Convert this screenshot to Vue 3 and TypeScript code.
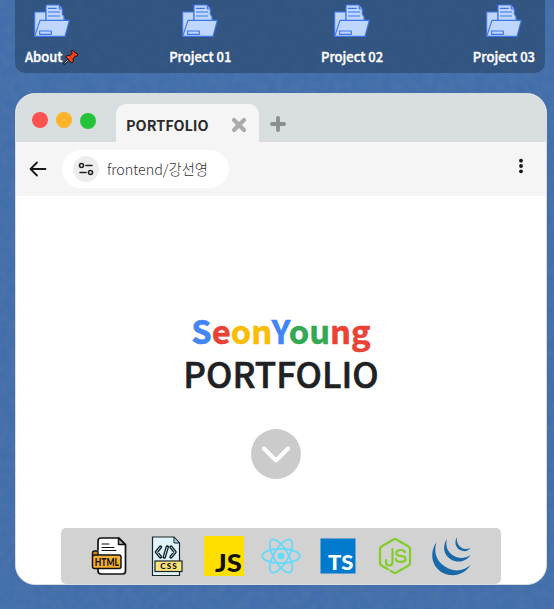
<script setup lang="ts">
interface Shortcut { label: string; pinned?: boolean }
interface Letter { char: string; tone: string }

const shortcuts: Shortcut[] = [
  { label: 'About', pinned: true },
  { label: 'Project 01' },
  { label: 'Project 02' },
  { label: 'Project 03' },
]

const letters: Letter[] = [
  { char: 'S', tone: 'blue' },
  { char: 'e', tone: 'red' },
  { char: 'o', tone: 'yellow' },
  { char: 'n', tone: 'yellow' },
  { char: 'Y', tone: 'blue' },
  { char: 'o', tone: 'green' },
  { char: 'u', tone: 'green' },
  { char: 'n', tone: 'red' },
  { char: 'g', tone: 'red' },
]
</script>

<template>
  <div class="desktop">
    <svg class="grain" width="554" height="609" aria-hidden="true">
      <filter id="grain" x="0" y="0" width="100%" height="100%">
        <feTurbulence type="fractalNoise" baseFrequency="0.12" numOctaves="3" seed="4" />
        <feColorMatrix type="matrix" values="0 0 0 0 0.1  0 0 0 0 0.2  0 0 0 0 0.4  0.7 0 0 0 -0.25" />
      </filter>
      <rect width="554" height="609" filter="url(#grain)" />
    </svg>

    <nav class="dock">
      <a v-for="item in shortcuts" :key="item.label" class="shortcut">
        <svg class="folder" viewBox="0 0 108 99" width="36" height="33">
          <g fill="#bfd6ff" stroke="#3f74e8" stroke-width="3.4" stroke-linejoin="round">
            <path d="M2 96V24h34v20h55l5 8-8 40z" />
            <path d="M36 50V3h40l9 12v16l5 6v13z" />
            <path d="M76 3v12h9M42 13h26M42 24h36M42 36h36" fill="none" />
            <path d="M18 49h88L93 97H2z" />
            <path d="M17 81h35v10H17z" />
          </g>
        </svg>
        <span class="label">{{ item.label }}<svg v-if="item.pinned" class="pin" viewBox="0 0 48 48" width="16" height="16">
          <path d="M18 31 4 44" stroke="#111" stroke-width="7" stroke-linecap="round" />
          <path d="M18 31 5 43" stroke="#d8e4ee" stroke-width="3" />
          <path d="M27 3 45 17l-4 5-4-1-7 9 1 8-5 4L8 23l6-4 7 1 7-8-3-4z" fill="#f8431c" stroke="#1b1111" stroke-width="3" stroke-linejoin="round" />
          <path d="m28 12 9 9M20 21l10 9" stroke="#b82a14" stroke-width="1.5" />
        </svg></span>
      </a>
    </nav>

    <main class="window">
      <header class="titlebar">
        <div class="lights"><i class="close" /><i class="minimize" /><i class="expand" /></div>
        <div class="tab">
          <span>PORTFOLIO</span>
          <svg viewBox="0 0 16 16" width="16" height="16"><path d="m3 3 10 10M13 3 3 13" stroke="#aaa" stroke-width="4.2" stroke-linecap="round" /></svg>
        </div>
        <svg class="plus" viewBox="0 0 16 16" width="16" height="16"><path d="M8 2v12M2 8h12" stroke="#8b8e90" stroke-width="3.8" stroke-linecap="round" /></svg>
      </header>

      <div class="toolbar">
        <svg class="back" viewBox="0 0 18 16" width="18" height="16"><path d="M16.5 8H1.5M8 1.5 1.5 8 8 14.5" fill="none" stroke="#191919" stroke-width="1.8" stroke-linecap="round" stroke-linejoin="round" /></svg>
        <div class="address">
          <span class="tune">
            <svg viewBox="0 0 16 14" width="16" height="14" fill="none" stroke="#222" stroke-width="1.6">
              <circle cx="3.5" cy="3.5" r="2" /><path d="M8 3.5h6M2 10.500h6" stroke-linecap="round" /><circle cx="12.5" cy="10.5" r="2" />
            </svg>
          </span>
          <span class="url">frontend/강선영</span>
        </div>
        <svg class="more" viewBox="0 0 4 16" width="4" height="16" fill="#161616"><circle cx="2" cy="2.7" r="1.9" /><circle cx="2" cy="8" r="1.9" /><circle cx="2" cy="13.3" r="1.9" /></svg>
      </div>

      <section class="hero">
        <h1>
          <span class="name"><span v-for="(l, i) in letters" :key="i" :class="l.tone">{{ l.char }}</span></span>
          <span class="title">PORTFOLIO</span>
        </h1>
        <button class="down" aria-label="Scroll down">
          <svg viewBox="0 0 28 17" width="28" height="17"><path d="m2 2.5 12 12 12-12" fill="none" stroke="#fff" stroke-width="4" stroke-linecap="round" stroke-linejoin="round" /></svg>
        </button>
      </section>

      <footer class="skills">
        <svg viewBox="0 0 40 40" width="40" height="40">
          <path d="M8 14V5q0-3 3-3h18l6.500 6.500V35q0 3-3 3H11q-3 0-3-3v-2" fill="#fff" stroke="#111" stroke-width="1.700" />
          <path d="M28.500 2v6.500H35z" fill="#bbb" stroke="#111" stroke-width="1.500" stroke-linejoin="round" />
          <path d="M12 8h7M12 11.500h12M12 14.500h14" stroke="#111" stroke-width="1.200" stroke-linecap="round" />
          <path d="M2.500 20v-3q0-2 2-2H8v5z" fill="#d9871d" stroke="#111" stroke-width="1.400" />
          <rect x="2.500" y="19" width="28.500" height="13.500" rx="2" fill="#f6ad36" stroke="#111" stroke-width="1.500" />
          <text x="4.800" y="29.700" textLength="24" lengthAdjust="spacingAndGlyphs" class="mark" font-size="11">HTML</text>
        </svg>
        <svg viewBox="0 0 40 40" width="40" height="40">
          <path d="M5.500 1H27l5.500 6v32.500h-27z" fill="#e0f3f8" stroke="#16262b" stroke-width="1.200" />
          <path d="M27 1v6h5.500z" fill="#a9dce9" stroke="#16262b" />
          <path d="m13.500 11-4 5 4 5M24 11l4 5-4 5M20.300 11l-3 10" fill="none" stroke="#14242f" stroke-width="3.500" stroke-linejoin="round" stroke-linecap="round" />
          <path d="m13.500 11-4 5 4 5M24 11l4 5-4 5M20.300 11l-3 10" fill="none" stroke="#b6dceb" stroke-width="1" />
          <rect x="8" y="25" width="27" height="10.500" fill="#fbe57b" stroke="#16262b" stroke-width="1.200" />
          <text x="13.300" y="33.200" textLength="16.500" class="mark" font-size="8.300">CSS</text>
        </svg>
        <svg viewBox="0 0 40 40" width="40" height="40">
          <path d="M0 0h40v40H0z" fill="#ffdf00" />
          <text x="11" y="36.300" textLength="26.800" lengthAdjust="spacingAndGlyphs" class="mark" font-size="25.500">JS</text>
        </svg>
        <svg viewBox="0 0 40 40" width="40" height="40" fill="none" stroke="#61dafb" stroke-width="1.700">
          <ellipse cx="20" cy="20" rx="18.800" ry="7.200" />
          <ellipse cx="20" cy="20" rx="18.800" ry="7.200" transform="rotate(60 20 20)" />
          <ellipse cx="20" cy="20" rx="18.800" ry="7.200" transform="rotate(120 20 20)" />
          <circle cx="20" cy="20" r="3.300" fill="#61dafb" stroke="none" />
        </svg>
        <svg viewBox="0 0 40 40" width="40" height="40">
          <path d="M2.500 2.500h35v35h-35z" fill="#007acc" />
          <text x="10" y="34" textLength="25.500" lengthAdjust="spacingAndGlyphs" class="mark light" font-size="21.500">TS</text>
        </svg>
        <svg viewBox="0 0 40 40" width="40" height="40" fill="none" stroke="#83cd29" stroke-width="2.200" stroke-linecap="round" stroke-linejoin="round">
          <path d="M13 33.200 6.500 29.500Q5 28.700 5 27V13q0-1.700 1.500-2.500L18.500 3.500q1.500-.9 3 0l12 7Q35 11.300 35 13v14q0 1.700-1.500 2.500l-12 7q-1.500.9-3 0l-3-1.800" />
          <path d="M17.500 13v13q0 3.500-3.300 3.500-3.200 0-3.200-3.500v-2" />
          <path d="M30 16q-1-2-4.200-2-4.500 0-4.500 2.900 0 2.600 4.500 3 4.800.4 4.800 3.100 0 2.900-4.800 2.900-4.500 0-5-3" />
        </svg>
        <svg viewBox="0 0 40 40" width="40" height="40" fill="#1769aa">
          <path d="M4.500 6C-3 17-.5 31 11 37c11 5 22 1 27.500-8C32 35 23 36 15.500 32 5 27 1 17 4.500 6z" />
          <path d="M15 3c-5 7-3.500 16 4 20.500 7 4 15.500 2 19.500-4.500-5 3.500-11.500 4-16.500 1C15.500 16 13 10 15 3z" />
          <path d="M25 1c-3 5-1.500 10.500 3 13 4 2.200 8.500 1 10.500-2-3 1.300-6.500 1.200-9-.3C26 9.500 24.300 5.500 25 1z" />
        </svg>
      </footer>
    </main>
  </div>
</template>

<style>
body { overflow: hidden; }
</style>

<style scoped>
* { box-sizing: border-box; }
.desktop {
  position: relative;
  display: flex;
  flex-direction: column;
  gap: 20px;
  height: 609px;
  padding: 0 7px 24px 15px;
  background: #426fab;
  font-family: "Noto Sans CJK KR", "Noto Sans", sans-serif;
}
.grain { position: absolute; inset: 0; }
.dock {
  position: relative;
  display: flex;
  justify-content: space-between;
  width: 530px;
  height: 73px;
  padding: 4px 10px 0;
  border-radius: 0 0 10px 10px;
  background: rgba(34, 57, 88, .5);
}
.shortcut { display: flex; flex-direction: column; align-items: center; gap: 9px; }
.label { display: flex; align-items: center; height: 22px; color: #fff; font-size: 13px; font-weight: 500; line-height: 22px; -webkit-text-stroke: .35px #fff; }
.pin { margin-left: 1px; }
.window {
  position: relative;
  display: flex;
  flex-direction: column;
  width: 532px;
  height: 492px;
  border: 1px solid #d8dde0;
  border-radius: 20px;
  background: #fff;
  overflow: hidden;
}
.titlebar { display: flex; flex: none; height: 48px; padding: 10px 0 0 16px; background: #d8dde0; }
.lights { display: flex; gap: 8px; margin-top: 8px; width: 84px; }
.lights i { width: 16px; height: 16px; border-radius: 50%; }
.close { background: #ff5350; }
.minimize { background: #fdb428; }
.lights .expand { margin-top: 1px; background: #24c33a; }
.tab {
  display: flex;
  justify-content: space-between;
  align-items: center;
  width: 143px;
  padding: 3px 12px 0 10px;
  border-radius: 10px 10px 0 0;
  background: #f5f5f5;
  color: #2b2b2b;
  font-size: 14.4px;
  font-weight: 700;
  line-height: 20px;
}
.plus { margin: 12px 0 0 11px; }
.toolbar { display: flex; flex: none; align-items: center; height: 54px; padding: 0 23px 0 14px; background: #f5f5f5; }
.back { margin: -1px 1px 0 -1px; }
.address { display: flex; align-items: center; gap: 8px; width: 167px; height: 38px; margin-left: 14px; padding-left: 11px; border-radius: 19px; background: #fff; }
.tune { display: flex; align-items: center; justify-content: center; width: 26px; height: 26px; border-radius: 50%; background: #ededed; }
.url { color: #333; font-size: 14.3px; font-weight: 300; line-height: 20px; }
.more { margin: 0 0 6px auto; }
.hero { display: flex; flex: 1; flex-direction: column; align-items: center; padding: 112px 0 0; }
h1 { display: flex; flex-direction: column; align-items: center; margin: 0; font-size: 35px; line-height: 43px; color: #202124; }
.name { font-size: 32.8px; font-weight: 700; -webkit-text-stroke: .5px; }
.title { font-weight: 500; -webkit-text-stroke: .6px; }
.blue { color: #4285f4; }
.red { color: #ea4335; }
.yellow { color: #fbbc05; }
.green { color: #34a853; }
.down { display: flex; align-items: center; justify-content: center; width: 50px; height: 50px; margin: 35px 10px 0 0; padding: 0; border: 0; border-radius: 50%; background: #cbcbcb; }
.skills { display: flex; flex: none; justify-content: center; gap: 17px; width: 440px; height: 56px; margin-left: 45px; padding-top: 8px; border-radius: 5px; background: #d2d2d2; }
.mark { fill: #111; font-family: Lato, sans-serif; font-weight: 900; }
.light { fill: #fff; }
</style>
